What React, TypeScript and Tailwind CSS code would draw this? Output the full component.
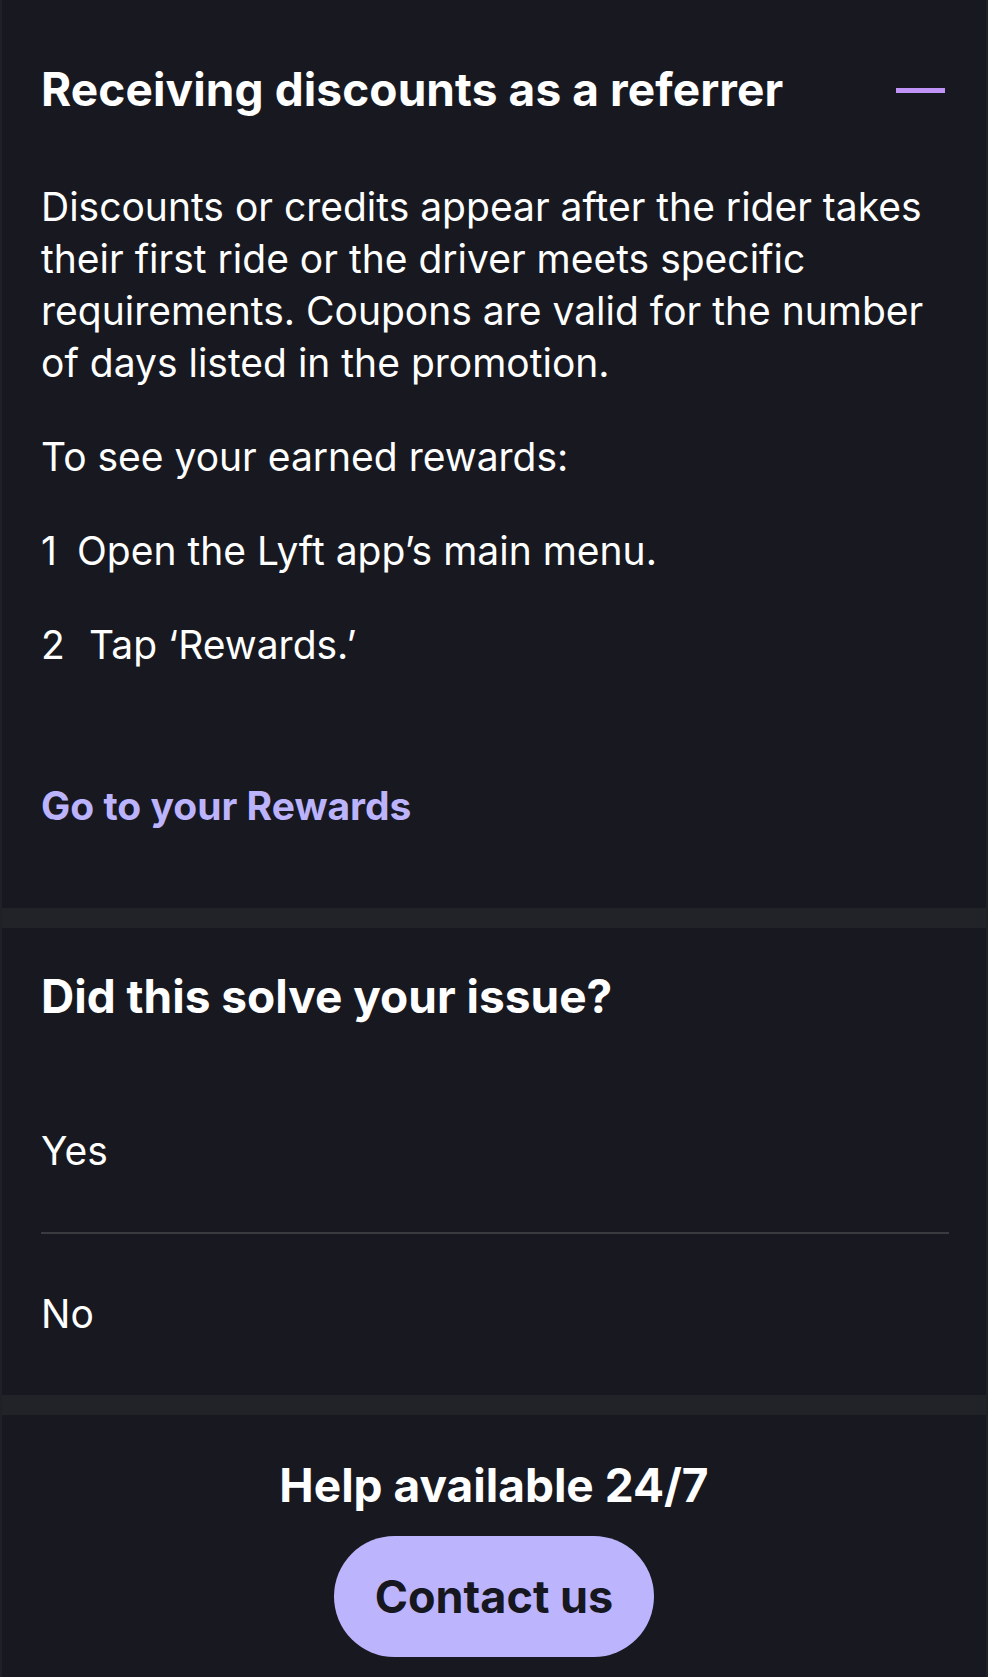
export default function App() {
  return (
    <div className="min-h-[1677px] w-[988px] border-x-[2px] border-[#202128] bg-[#181920] font-[Inter,sans-serif] text-white antialiased">
      <section className="pl-[39px] pr-[38px] pt-[61px] pb-[76px]">
        <div className="flex items-center justify-between">
          <h2 className="whitespace-nowrap text-[46px] font-bold leading-[56px] tracking-[0.1px]">
            Receiving discounts as a referrer
          </h2>
          <span className="mt-[3px] mr-[3px] block h-[5px] w-[49px] bg-[#c094f7]" />
        </div>
        <div className="mt-[64px] text-[39px] leading-[52px]">
          <p>
            <span className="block whitespace-nowrap">Discounts or credits appear after the rider takes</span>
            <span className="block whitespace-nowrap">their first ride or the driver meets specific</span>
            <span className="block whitespace-nowrap">requirements. Coupons are valid for the number</span>
            <span className="block whitespace-nowrap">of days listed in the promotion.</span>
          </p>
          <p className="mt-[42px] whitespace-nowrap">To see your earned rewards:</p>
          <ol className="mt-[42px] flex flex-col gap-[42px]">
            <li className="flex whitespace-nowrap">
              <span className="w-[36px]">1</span>
              <span>Open the Lyft app’s main menu.</span>
            </li>
            <li className="flex whitespace-nowrap">
              <span className="w-[48px]">2</span>
              <span>Tap ‘Rewards.’</span>
            </li>
          </ol>
          <a className="mt-[109px] block whitespace-nowrap font-bold text-[#bcb3fd]">Go to your Rewards</a>
        </div>
      </section>

      <div className="h-[20px] bg-[#222328]" />

      <section className="pl-[39px] pr-[38px] pt-[40px]">
        <h2 className="whitespace-nowrap text-[46px] font-bold leading-[56px]">Did this solve your issue?</h2>
        <div className="mt-[48px] text-[39px] leading-[52px]">
          <button className="block w-full pt-[53px] pb-[55px] text-left">Yes</button>
          <div className="mr-[-1px] h-[2px] bg-[#3a3b40]" />
          <button className="block w-full pt-[54px] pb-[55px] text-left">No</button>
        </div>
      </section>

      <div className="h-[20px] bg-[#222328]" />

      <section className="flex flex-col items-center pt-[42px] pb-[20px]">
        <h2 className="whitespace-nowrap text-[46px] font-bold leading-[56px]">Help available 24/7</h2>
        <button className="mt-[23px] flex h-[121px] w-[320px] items-center justify-center rounded-full bg-[#bdb4fe] text-[45px] font-bold text-[#17171f]">
          Contact us
        </button>
      </section>
    </div>
  );
}
